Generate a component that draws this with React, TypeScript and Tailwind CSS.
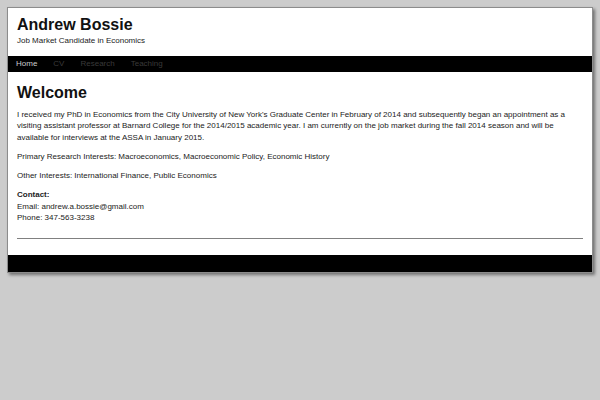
const nav = [
  { label: "Home", active: true },
  { label: "CV", active: false },
  { label: "Research", active: false },
  { label: "Teaching", active: false },
];

export default function App() {
  return (
    <div className="min-h-screen bg-[#cccccc] p-[7px] font-['Liberation_Sans',Arial,sans-serif] text-[#222222]">
      <div className="border border-[#8c8c8c] bg-white shadow-[2px_2px_3px_rgba(0,0,0,0.45)]">
        <header className="px-[9px] pt-[7px] pb-[11px]">
          <h1 className="text-[16px] font-bold leading-[19px] text-[#111111]">Andrew Bossie</h1>
          <p className="mt-[2px] text-[8px] leading-[9px]">Job Market Candidate in Economics</p>
        </header>

        <nav className="flex h-[16px] items-center gap-[16px] bg-black pl-[8px] text-[8px]">
          {nav.map((item) => (
            <a
              key={item.label}
              href="#"
              className={item.active ? "text-[#cccccc]" : "text-[#3a3a3a]"}
            >
              {item.label}
            </a>
          ))}
        </nav>

        <main className="px-[9px] pt-[11px] pb-[16px]">
          <h2 className="text-[16px] font-bold leading-[19px] text-[#111111]">Welcome</h2>
          <div className="mt-[7px] text-[8px] leading-[11.25px]">
            <p className="mb-[8px]">
              I received my PhD in Economics from the City University of New York's Graduate Center
              in February of 2014 and subsequently began an appointment as a visiting assistant
              professor at Barnard College for the 2014/2015 academic year. I am currently on the
              job market during the fall 2014 season and will be available for interviews at the
              ASSA in January 2015.
            </p>
            <p className="mb-[8px]">
              Primary Research Interests: Macroeconomics, Macroeconomic Policy, Economic History
            </p>
            <p className="mb-[8px]">Other Interests: International Finance, Public Economics</p>
            <p>
              <strong className="font-bold">Contact:</strong>
              <br />
              Email: andrew.a.bossie@gmail.com
              <br />
              Phone: 347-563-3238
            </p>
          </div>
          <hr className="mt-[15px] border-0 border-t border-[#808080]" />
        </main>

        <footer className="h-[17px] bg-black" />
      </div>
    </div>
  );
}
